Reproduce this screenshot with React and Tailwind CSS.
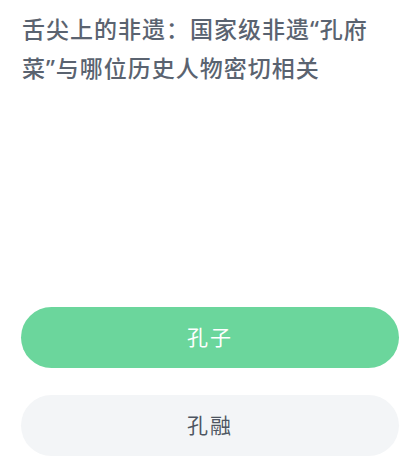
export default function App() {
  const font = { fontFamily: '"Noto Sans", "Noto Sans CJK SC", sans-serif' };

  return (
    <div className="w-[418px] h-[471px] bg-white flex flex-col" style={font}>
      <h1 className="pl-[22px] pr-4 pt-[10px] text-[23px] leading-[39px] tracking-[1px] text-[#5a6370] font-medium">
        舌尖上的非遗：国家级非遗“孔府菜”与哪位历史人物密切相关
      </h1>
      <div className="mt-auto mb-[15px] pl-[21px] pr-[19px] flex flex-col gap-[27px]">
        <button className="h-[61px] w-full rounded-full bg-[#6bd69c] text-white text-[21px] tracking-[2px]">
          孔子
        </button>
        <button className="h-[61px] w-full rounded-full bg-[#f3f5f7] text-[#4d5561] text-[21px] tracking-[2px]">
          孔融
        </button>
      </div>
    </div>
  );
}
